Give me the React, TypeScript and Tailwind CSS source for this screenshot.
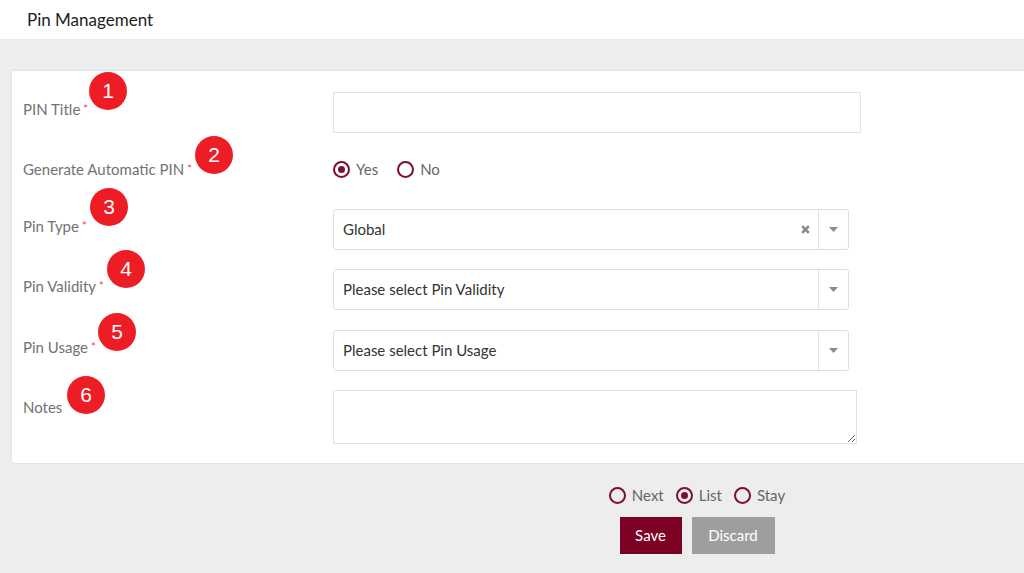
import React from 'react'

const font = { fontFamily: 'Lato, "Open Sans", Arial, sans-serif' }

function Badge({ n, x, y }: { n: number; x: number; y: number }) {
  // numbered callout laid over the form
  return (
    <div
      className="absolute flex h-[38px] w-[38px] -translate-x-1/2 -translate-y-1/2 items-center justify-center rounded-full bg-[#ee1c24] text-[21px] text-white"
      style={{ left: x, top: y, fontFamily: '"Liberation Sans", Arial, sans-serif' }}
    >
      {n}
    </div>
  )
}

function Radio({ checked, label }: { checked?: boolean; label: string }) {
  return (
    <label className="flex items-center gap-[6px]">
      <span className="flex h-[17px] w-[17px] items-center justify-center rounded-full border-2 border-[#7a1030]">
        {checked && <span className="h-[7px] w-[7px] rounded-full bg-[#7a1030]" />}
      </span>
      <span className="text-[15px] text-[#666]">{label}</span>
    </label>
  )
}

function Label({ text, required }: { text: string; required?: boolean }) {
  return (
    <div className="w-[310px] shrink-0 text-[15px] leading-5 text-[#727272]">
      {text}
      {required && <span className="ml-[3px] align-top text-[11px] text-[#e0474c]">*</span>}
    </div>
  )
}

function Caret() {
  return (
    <div className="flex w-[30px] items-center justify-center border-l border-[#e3e3e3]">
      <svg width="9" height="5" viewBox="0 0 9 5">
        <path d="M0 0h9L4.5 5z" fill="#8a8a8a" />
      </svg>
    </div>
  )
}

function Select({ value, clearable }: { value: string; clearable?: boolean }) {
  return (
    <div className="flex h-[41px] w-[516px] rounded-[3px] border border-[#dedede] bg-white">
      <div className="flex flex-1 items-center pl-[9px] text-[15px] text-[#333]">{value}</div>
      {clearable && (
        <div className="flex w-[26px] items-center justify-center">
          <svg width="9" height="9" viewBox="0 0 9 9">
            <path d="M1.2 1.2l6.6 6.6M7.8 1.2L1.2 7.8" stroke="#888" strokeWidth="2.6" />
          </svg>
        </div>
      )}
      <Caret />
    </div>
  )
}

export default function App() {
  return (
    <div className="min-h-[573px] bg-[#ededed]" style={font}>
      <div className="flex h-[39px] items-center bg-white pl-[27px] text-[17px] text-[#222]">
        Pin Management
      </div>

      <div className="relative mt-[31px] ml-[11px] mr-[-6px] rounded-[3px] border border-[#e1e5ea] bg-white pt-[21px] pb-[19px] pl-[11px]">
        <div className="flex h-[41px]">
          <div className="pt-[7px]"><Label text="PIN Title" required /></div>
          <div className="h-[41px] w-[528px] border border-[#e3e3e3]" />
        </div>

        <div className="mt-[16px] flex h-[40px] items-center">
          <Label text="Generate Automatic PIN" required />
          <div className="flex items-center gap-[19px]">
            <Radio checked label="Yes" />
            <Radio label="No" />
          </div>
        </div>

        <div className="mt-[20px] flex">
          <div className="pt-[7px]"><Label text="Pin Type" required /></div>
          <Select value="Global" clearable />
        </div>

        <div className="mt-[19px] flex">
          <div className="pt-[7px]"><Label text="Pin Validity" required /></div>
          <Select value="Please select Pin Validity" />
        </div>

        <div className="mt-[20px] flex">
          <div className="pt-[7px]"><Label text="Pin Usage" required /></div>
          <Select value="Please select Pin Usage" />
        </div>

        <div className="mt-[19px] flex">
          <div className="pt-[7px]"><Label text="Notes" /></div>
          <textarea className="h-[54px] w-[524px] resize border border-[#e3e3e3] outline-none" />
        </div>

        <Badge n={1} x={96} y={20} />
        <Badge n={2} x={202} y={84} />
        <Badge n={3} x={97} y={136} />
        <Badge n={4} x={114} y={198} />
        <Badge n={5} x={105} y={261} />
        <Badge n={6} x={74} y={324} />
      </div>

      <div className="ml-[597px] mt-[20px] flex w-[200px] flex-col items-center">
        <div className="flex items-center gap-[12px]">
          <Radio label="Next" />
          <Radio checked label="List" />
          <Radio label="Stay" />
        </div>
        <div className="mt-[10px] flex gap-[10px]">
          <button className="h-[37px] w-[62px] bg-[#7d0025] text-[15px] text-white">Save</button>
          <button className="h-[37px] w-[83px] bg-[#9e9e9e] text-[15px] text-white">Discard</button>
        </div>
      </div>
    </div>
  )
}
